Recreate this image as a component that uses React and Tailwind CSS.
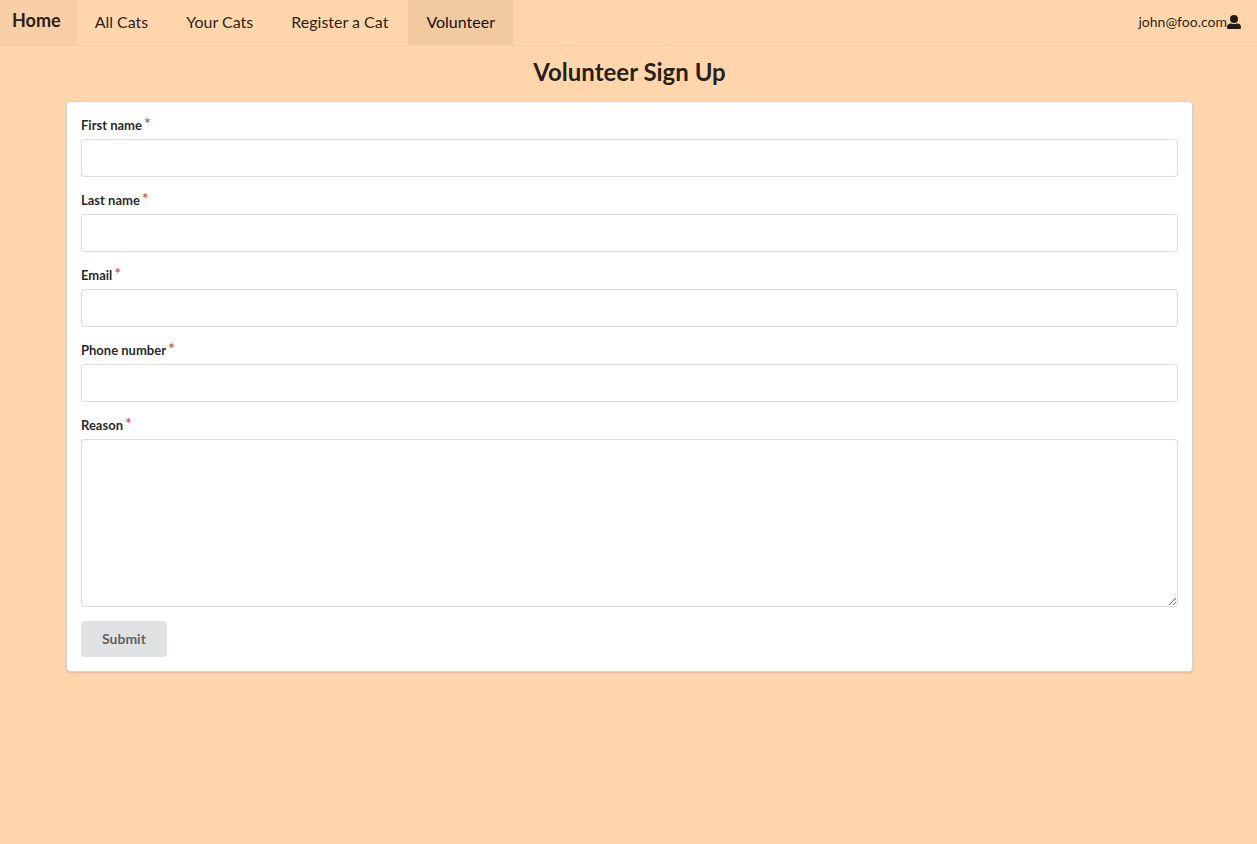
const links = ["All Cats", "Your Cats", "Register a Cat"];
const fields = [
  { id: "firstName", label: "First name", type: "text" },
  { id: "lastName", label: "Last name", type: "text" },
  { id: "email", label: "Email", type: "email" },
  { id: "phone", label: "Phone number", type: "tel" },
];

function UserIcon() {
  return (
    <svg viewBox="0 0 14 14" className="h-[14px] w-[14px]" fill="currentColor" aria-hidden="true">
      <circle cx="7" cy="4" r="4" />
      <path d="M4 8.5h.6a5.5 5.5 0 0 0 4.8 0h.6a4 4 0 0 1 4 4v.3a1.2 1.2 0 0 1-1.2 1.2H1.2A1.2 1.2 0 0 1 0 12.800v-.3a4 4 0 0 1 4-4z" />
    </svg>
  );
}

function FieldLabel({ id, children }) {
  return (
    <label htmlFor={id} className="mb-1 flex gap-0.5 text-[13px] leading-[19px] font-bold">
      {children}
      <span className="-mt-[3px] text-base leading-[19px] font-normal text-[#db2828]">*</span>
    </label>
  );
}

export default function App() {
  return (
    <div className="min-h-screen bg-[#ffd5ab] font-['Lato',sans-serif] text-black/87">
      <nav className="flex h-[46px] items-stretch border-b border-[#d4d4d5] text-base">
        <a href="#home" className="flex items-center bg-black/3 pr-4 pb-1.5 pl-3 text-lg font-bold">
          Home
        </a>
        {links.map((link) => (
          <a key={link} href="#cats" className="flex items-center pr-5 pb-0.5 pl-[18px]">
            {link}
          </a>
        ))}
        <a href="#volunteer" aria-current="page" className="flex items-center bg-black/5 px-[18px] pb-0.5 text-black/95">
          Volunteer
        </a>
        <button type="button" className="ml-auto flex items-center pr-4 pb-0.5 text-sm">
          john@foo.com
          <UserIcon />
        </button>
      </nav>
      <div className="pl-0.5">
        <main className="mx-auto w-full max-w-[1127px]">
          <h1 className="pt-[11px] pb-[14px] text-center text-2xl leading-[30px] font-bold">Volunteer Sign Up</h1>
          <form className="rounded border border-[#d4d4d5] bg-white p-[14px] shadow-[0_1px_2px_0_rgba(34,36,38,0.15)]">
            {fields.map((f) => (
              <div key={f.id} className="mb-[14px]">
                <FieldLabel id={f.id}>{f.label}</FieldLabel>
                <input
                  id={f.id}
                  type={f.type}
                  required
                  className="block h-[38px] w-full rounded border border-[#22242626] bg-white px-[14px] text-sm outline-none"
                />
              </div>
            ))}
            <div className="mb-[14px]">
              <FieldLabel id="reason">Reason</FieldLabel>
              <textarea
                id="reason"
                required
                className="block h-[168px] w-full resize-y rounded border border-[#22242626] bg-white px-[14px] py-[11px] text-sm outline-none"
              />
            </div>
            <button type="submit" className="block h-9 rounded bg-[#e0e1e2] px-[21px] text-sm font-bold text-black/60">
              Submit
            </button>
          </form>
        </main>
      </div>
    </div>
  );
}
